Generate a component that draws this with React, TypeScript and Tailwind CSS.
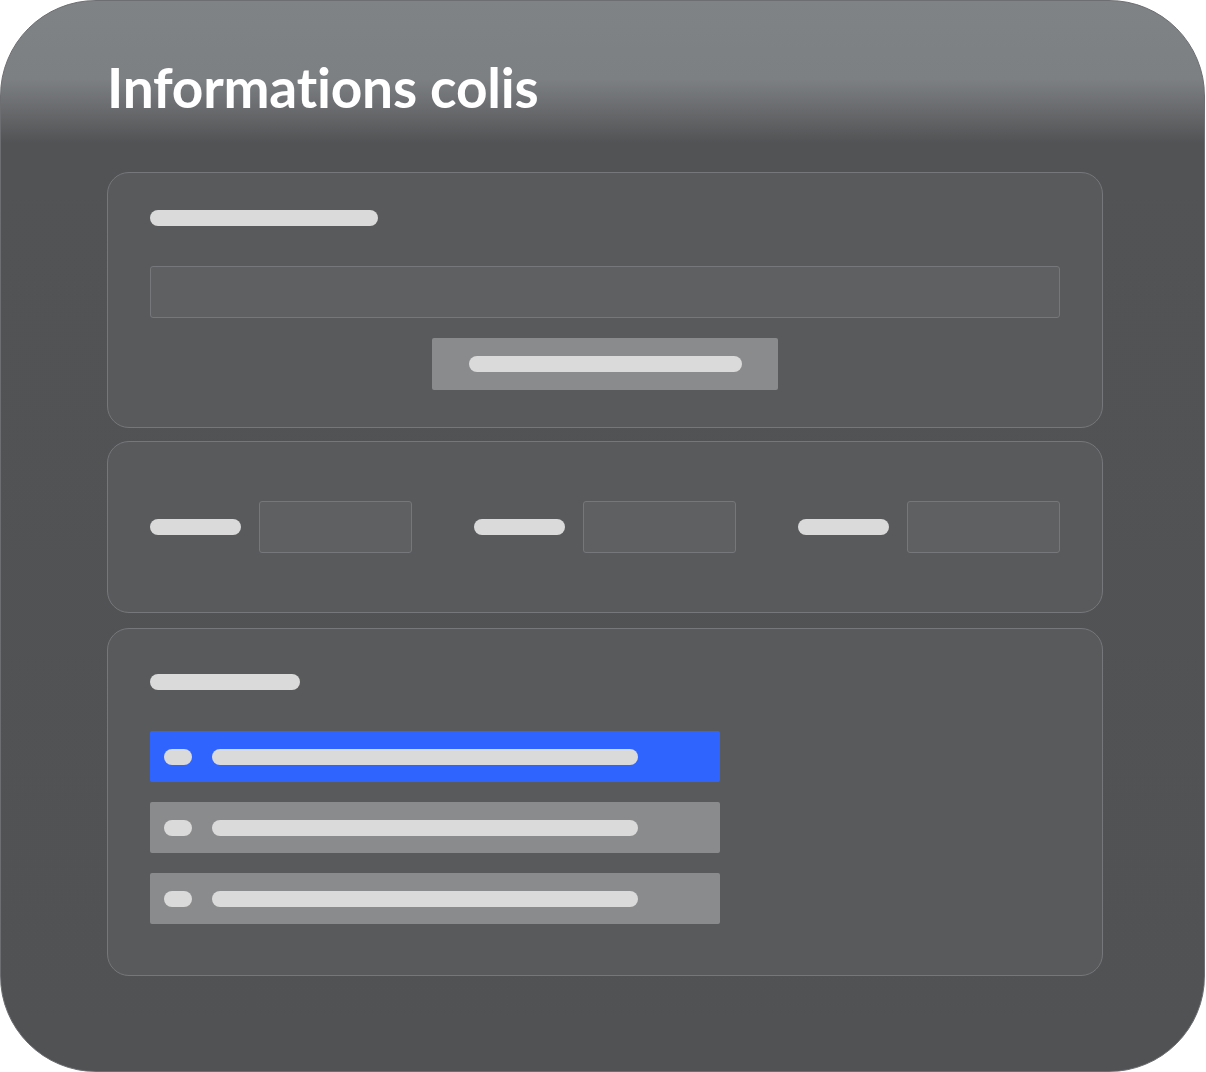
import React from 'react';

const Pill: React.FC<{ className: string }> = ({ className }) => (
  <div className={`h-4 rounded-full bg-[#dadada] ${className}`} />
);

const Card: React.FC<{ className?: string; children: React.ReactNode }> = ({ className = '', children }) => (
  <div className={`rounded-[22px] border border-[#76777a] bg-[#595a5c] px-[42px] ${className}`}>{children}</div>
);

const Field: React.FC<{ className?: string }> = ({ className = '' }) => (
  <div className={`h-[52px] rounded-[3px] border border-[#76777a] bg-[#5f6062] ${className}`} />
);

const ListRow: React.FC<{ active?: boolean }> = ({ active }) => (
  <div
    className={`flex h-[51px] w-[570px] items-center gap-5 rounded-[2px] px-[14px] ${
      active ? 'bg-[#3064ff]' : 'bg-[#8a8b8d]'
    }`}
  >
    <Pill className="w-[28px]" />
    <Pill className="w-[426px]" />
  </div>
);

const App: React.FC = () => {
  return (
    <div className="min-h-screen bg-white">
      <div className="h-[1072px] w-[1205px] rounded-[96px] border border-[#6c6e71] bg-[linear-gradient(180deg,#808386_0px,#7d8083_78px,#525355_142px,#515254_100%)] pl-[106px] pr-[101px] pt-[54px]">
        <h1 className="font-['Lato',sans-serif] text-[55px] font-bold leading-[64px] tracking-[-0.2px] text-white">
          Informations colis
        </h1>

        <div className="mt-[53px] flex flex-col">
          <Card className="pb-[37px] pt-[37px]">
            <Pill className="w-[228px]" />
            <Field className="mt-10 w-full" />
            <div className="mt-5 flex justify-center">
              <div className="flex h-[52px] w-[346px] items-center justify-center rounded-[2px] bg-[#8a8b8d]">
                <Pill className="w-[273px]" />
              </div>
            </div>
          </Card>

          <Card className="mt-[13px] flex h-[172px] items-center justify-between">
            {[0, 1, 2].map((i) => (
              <div key={i} className="flex items-center gap-[18px]">
                <Pill className="w-[91px]" />
                <Field className="w-[153px]" />
              </div>
            ))}
          </Card>

          <Card className="mt-[15px] h-[348px] pt-[45px]">
            <Pill className="w-[150px]" />
            <div className="mt-[41px] flex flex-col gap-5">
              <ListRow active />
              <ListRow />
              <ListRow />
            </div>
          </Card>
        </div>
      </div>
    </div>
  );
};

export default App;
